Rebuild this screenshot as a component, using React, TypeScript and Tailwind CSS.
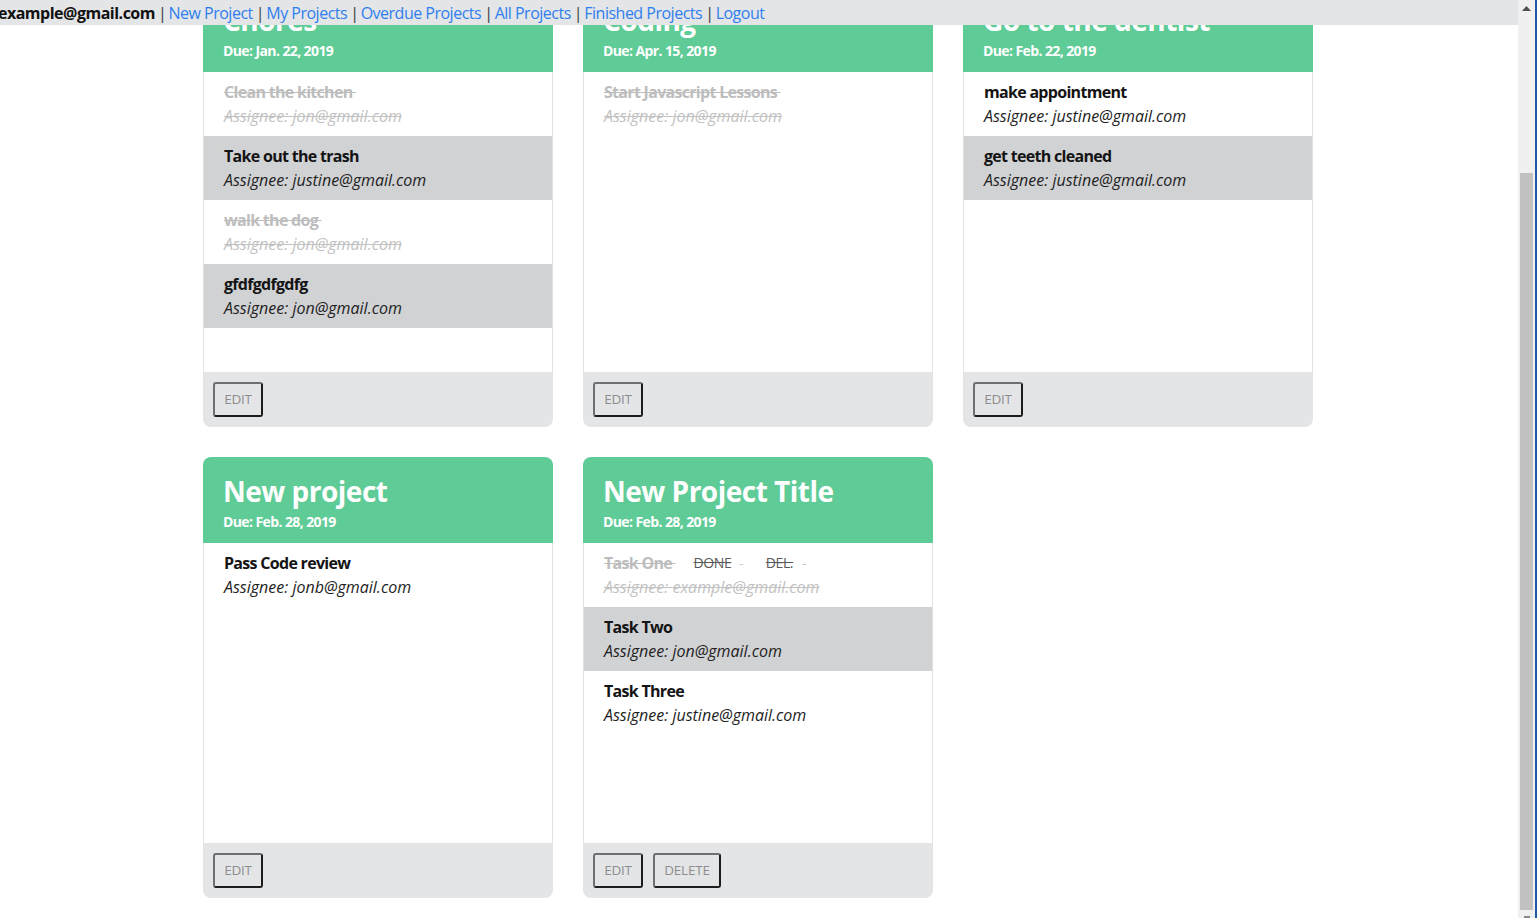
import React from "react";

type Task = { title: string; assignee: string; done?: boolean; actions?: boolean };
type Project = { title: string; due: string; tasks: Task[]; del?: boolean };

const projects: Project[] = [
  {
    title: "Chores",
    due: "Due: Jan. 22, 2019",
    tasks: [
      { title: "Clean the kitchen", assignee: "jon@gmail.com", done: true },
      { title: "Take out the trash", assignee: "justine@gmail.com" },
      { title: "walk the dog", assignee: "jon@gmail.com", done: true },
      { title: "gfdfgdfgdfg", assignee: "jon@gmail.com" },
    ],
  },
  {
    title: "Coding",
    due: "Due: Apr. 15, 2019",
    tasks: [{ title: "Start Javascript Lessons", assignee: "jon@gmail.com", done: true }],
  },
  {
    title: "Go to the dentist",
    due: "Due: Feb. 22, 2019",
    tasks: [
      { title: "make appointment", assignee: "justine@gmail.com" },
      { title: "get teeth cleaned", assignee: "justine@gmail.com" },
    ],
  },
  {
    title: "New project",
    due: "Due: Feb. 28, 2019",
    tasks: [{ title: "Pass Code review", assignee: "jonb@gmail.com" }],
  },
  {
    title: "New Project Title",
    due: "Due: Feb. 28, 2019",
    del: true,
    tasks: [
      { title: "Task One", assignee: "example@gmail.com", done: true, actions: true },
      { title: "Task Two", assignee: "jon@gmail.com" },
      { title: "Task Three", assignee: "justine@gmail.com" },
    ],
  },
];

function Btn({ label, w }: { label: string; w: string }) {
  return (
    <button
      className={`${w} h-[35px] rounded-[3px] border-2 border-t-[#6b7075] border-l-[#6b7075] border-b-[#1c1c1c] border-r-[#1c1c1c] bg-transparent text-[13.5px] text-[#8d8d8d] tracking-[-0.2px] flex items-center justify-center`}
    >
      {label}
    </button>
  );
}

function TaskRow({ t, idx }: { t: Task; idx: number }) {
  const bg = idx % 2 === 1 ? "bg-[#d1d2d4]" : "bg-white";
  return (
    <div className={`${bg} px-[20px] py-[8px]`}>
      <div className="h-[24px] leading-[24px] flex items-center text-[16px] font-bold tracking-[-0.7px]">
        {t.done ? (
          <span className="text-[#bdbdbd] line-through">{t.title}&nbsp;</span>
        ) : (
          <span className="text-[#141414]">{t.title}</span>
        )}
        {t.actions && (
          <>
            <span className="ml-[18px] font-normal text-[14px] tracking-[-0.4px] text-[#5a5a5a] line-through">DONE</span>
            <span className="ml-[8px] font-normal text-[13px] text-[#c4c4c4]">-</span>
            <span className="ml-[23px] font-normal text-[14px] tracking-[-0.4px] text-[#5a5a5a] line-through">DEL.</span>
            <span className="ml-[9px] font-normal text-[13px] text-[#c4c4c4]">-</span>
          </>
        )}
      </div>
      <div
        className={`h-[24px] leading-[24px] text-[16px] italic tracking-[0px] ${
          t.done ? "text-[#c2c2c2] line-through" : "text-[#1e1e1e]"
        }`}
      >
        Assignee: {t.assignee}
      </div>
    </div>
  );
}

function Card({ p }: { p: Project }) {
  return (
    <div className="w-[350px] h-[441px] flex flex-col rounded-[8px] overflow-hidden">
      <div className="h-[86px] bg-[#5fcc97] text-white pt-[15px] px-[20px]">
        <div className="text-[28px] leading-[38px] font-bold tracking-[-0.5px] whitespace-nowrap">{p.title}</div>
        <div className="mt-[2px] text-[14px] leading-[20px] font-bold tracking-[-0.6px]">{p.due}</div>
      </div>
      <div className="h-[300px] bg-white border-x border-[#e1e1e1] flex flex-col">
        {p.tasks.map((t, i) => (
          <TaskRow key={i} t={t} idx={i} />
        ))}
      </div>
      <div className="h-[55px] bg-[#e4e5e7] pl-[10px] pt-[10px] flex gap-[10px] items-start">
        <Btn label="EDIT" w="w-[50px]" />
        {p.del && <Btn label="DELETE" w="w-[68px]" />}
      </div>
    </div>
  );
}

export default function App() {
  const links = ["New Project", "My Projects", "Overdue Projects", "All Projects", "Finished Projects", "Logout"];
  return (
    <div
      className="w-[1537px] h-[918px] flex overflow-hidden bg-white tracking-[-0.3px]"
      style={{ fontFamily: '"Open Sans", "Noto Sans", sans-serif' }}
    >
      <div className="relative flex-1 overflow-hidden">
        <nav className="absolute top-0 left-0 right-0 z-10 h-[25px] bg-[#e4e5e7] flex items-center text-[16px] whitespace-nowrap">
          <span className="font-bold text-[#111] -ml-[2px] tracking-[-0.5px]">example@gmail.com</span>
          {links.map((l) => (
            <React.Fragment key={l}>
              <span className="text-[#3a3a3a] ml-[3px] mr-[2px]">|</span>
              <a className="text-[#2f7ff0] tracking-[-0.5px]">{l}</a>
            </React.Fragment>
          ))}
        </nav>
        <div className="-mt-[14px] pl-[203px] grid grid-cols-[repeat(3,350px)] gap-[30px]">
          {projects.map((p) => (
            <Card key={p.title} p={p} />
          ))}
        </div>
      </div>
      <div className="w-[17px] h-full bg-[#f0f0f0] flex flex-col items-center">
        <div className="h-[17px] w-full flex items-center justify-center">
          <svg width="9" height="5" viewBox="0 0 9 5">
            <path d="M4.5 0 L9 5 L0 5 Z" fill="#505050" />
          </svg>
        </div>
        <div className="mt-[156px] w-[13px] h-[737px] bg-[#c1c1c1]" />
        <div className="flex-1 w-full flex items-end justify-center">
          <div className="w-[6px] h-[2px] bg-[#888]" />
        </div>
      </div>
      <div className="w-[2px] h-full bg-[#1d5aa6]" />
    </div>
  );
}
